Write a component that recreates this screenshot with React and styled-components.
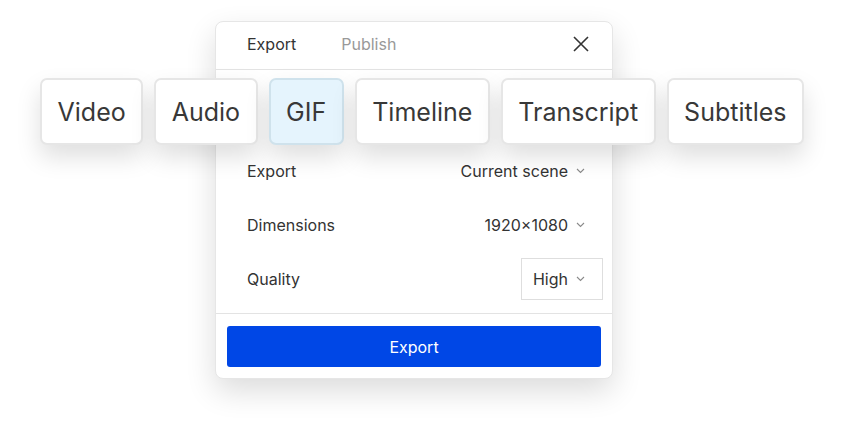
import React from "react";
import styled, { createGlobalStyle } from "styled-components";

const GlobalStyle = createGlobalStyle`
  html, body { margin: 0; padding: 0; background: #ffffff; }
  body { font-family: Inter, "Noto Sans", sans-serif; color: #333; }
`;

const Stage = styled.div`
  position: relative;
  width: 844px;
  height: 427px;
  padding-top: 21px;
  box-sizing: border-box;
  overflow: hidden;
`;

const Dialog = styled.div`
  margin-left: 215px;
  width: 398px;
  box-sizing: border-box;
  background: #fff;
  border: 1px solid #e6e6e6;
  border-radius: 8px;
  box-shadow: 0 12px 30px rgba(0, 0, 0, 0.14);
  display: flex;
  flex-direction: column;
`;

const Header = styled.div`
  height: 48px;
  box-sizing: border-box;
  display: flex;
  align-items: center;
  padding: 0 22px 3px 31px;
  border-bottom: 1px solid #e3e3e3;
  gap: 45px;
`;

const Tab = styled.div`
  font-size: 16px;
  color: ${(p) => (p.$active ? "#333" : "#999")};
`;

const CloseBtn = styled.button`
  margin-left: auto;
  border: none;
  background: none;
  padding: 0;
  width: 18px;
  height: 18px;
  display: flex;
  align-items: center;
  justify-content: center;
  color: #333;
`;

const FormatArea = styled.div`
  height: 74px;
`;

const Row = styled.div`
  height: 54px;
  display: flex;
  align-items: center;
  justify-content: space-between;
  padding: 0 9px 0 31px;
`;

const Label = styled.div`
  font-size: 16px;
  color: #333;
`;

const Value = styled.div`
  height: 42px;
  box-sizing: border-box;
  display: flex;
  align-items: center;
  gap: 8px;
  padding: 0 17px 0 ${(p) => (p.$boxed ? "11px" : "0")};
  border: 1px solid ${(p) => (p.$boxed ? "#dedede" : "transparent")};
  font-size: 16px;
  color: #333;
`;

const Divider = styled.div`
  margin-top: 7px;
  height: 1px;
  background: #e3e3e3;
`;

const Footer = styled.div`
  padding: 12px 11px 11px;
`;

const PrimaryButton = styled.button`
  width: 100%;
  height: 41px;
  border: none;
  border-radius: 3px;
  background: #0047e6;
  color: #fff;
  font-family: inherit;
  font-size: 16px;
  padding-bottom: 1px;
`;

const ChipRow = styled.div`
  position: absolute;
  top: 78px;
  left: 0;
  right: 0;
  display: flex;
  justify-content: center;
  gap: 11px;
`;

const Chip = styled.div`
  height: 67px;
  box-sizing: border-box;
  padding: 0 15.5px;
  display: flex;
  align-items: center;
  border: 2px solid ${(p) => (p.$active ? "#cfe2ec" : "#e6e6e6")};
  background: ${(p) => (p.$active ? "#e5f4fd" : "#fff")};
  border-radius: 7px;
  font-size: 25px;
  color: #383838;
  box-shadow: 0 12px 24px rgba(0, 0, 0, 0.13);
`;

const Chevron = () => (
  <svg width="9" height="6" viewBox="0 0 9 6" fill="none">
    <path d="M1 1l3.5 3.5L8 1" stroke="#8a8a8a" strokeWidth="1.1" />
  </svg>
);

const rows = [
  { label: "Export", value: "Current scene" },
  { label: "Dimensions", value: "1920×1080" },
  { label: "Quality", value: "High", boxed: true },
];

const chips = ["Video", "Audio", "GIF", "Timeline", "Transcript", "Subtitles"];

export default function App() {
  return (
    <>
      <GlobalStyle />
      <Stage>
        <Dialog>
          <Header>
            <Tab $active>Export</Tab>
            <Tab>Publish</Tab>
            <CloseBtn aria-label="Close">
              <svg width="16" height="16" viewBox="0 0 16 16" fill="none">
                <path d="M1 1l14 14M15 1L1 15" stroke="#333" strokeWidth="1.6" />
              </svg>
            </CloseBtn>
          </Header>
          <FormatArea />
          {rows.map((r) => (
            <Row key={r.label}>
              <Label>{r.label}</Label>
              <Value $boxed={r.boxed}>
                {r.value}
                <Chevron />
              </Value>
            </Row>
          ))}
          <Divider />
          <Footer>
            <PrimaryButton>Export</PrimaryButton>
          </Footer>
        </Dialog>
        <ChipRow>
          {chips.map((c) => (
            <Chip key={c} $active={c === "GIF"}>
              {c}
            </Chip>
          ))}
        </ChipRow>
      </Stage>
    </>
  );
}
